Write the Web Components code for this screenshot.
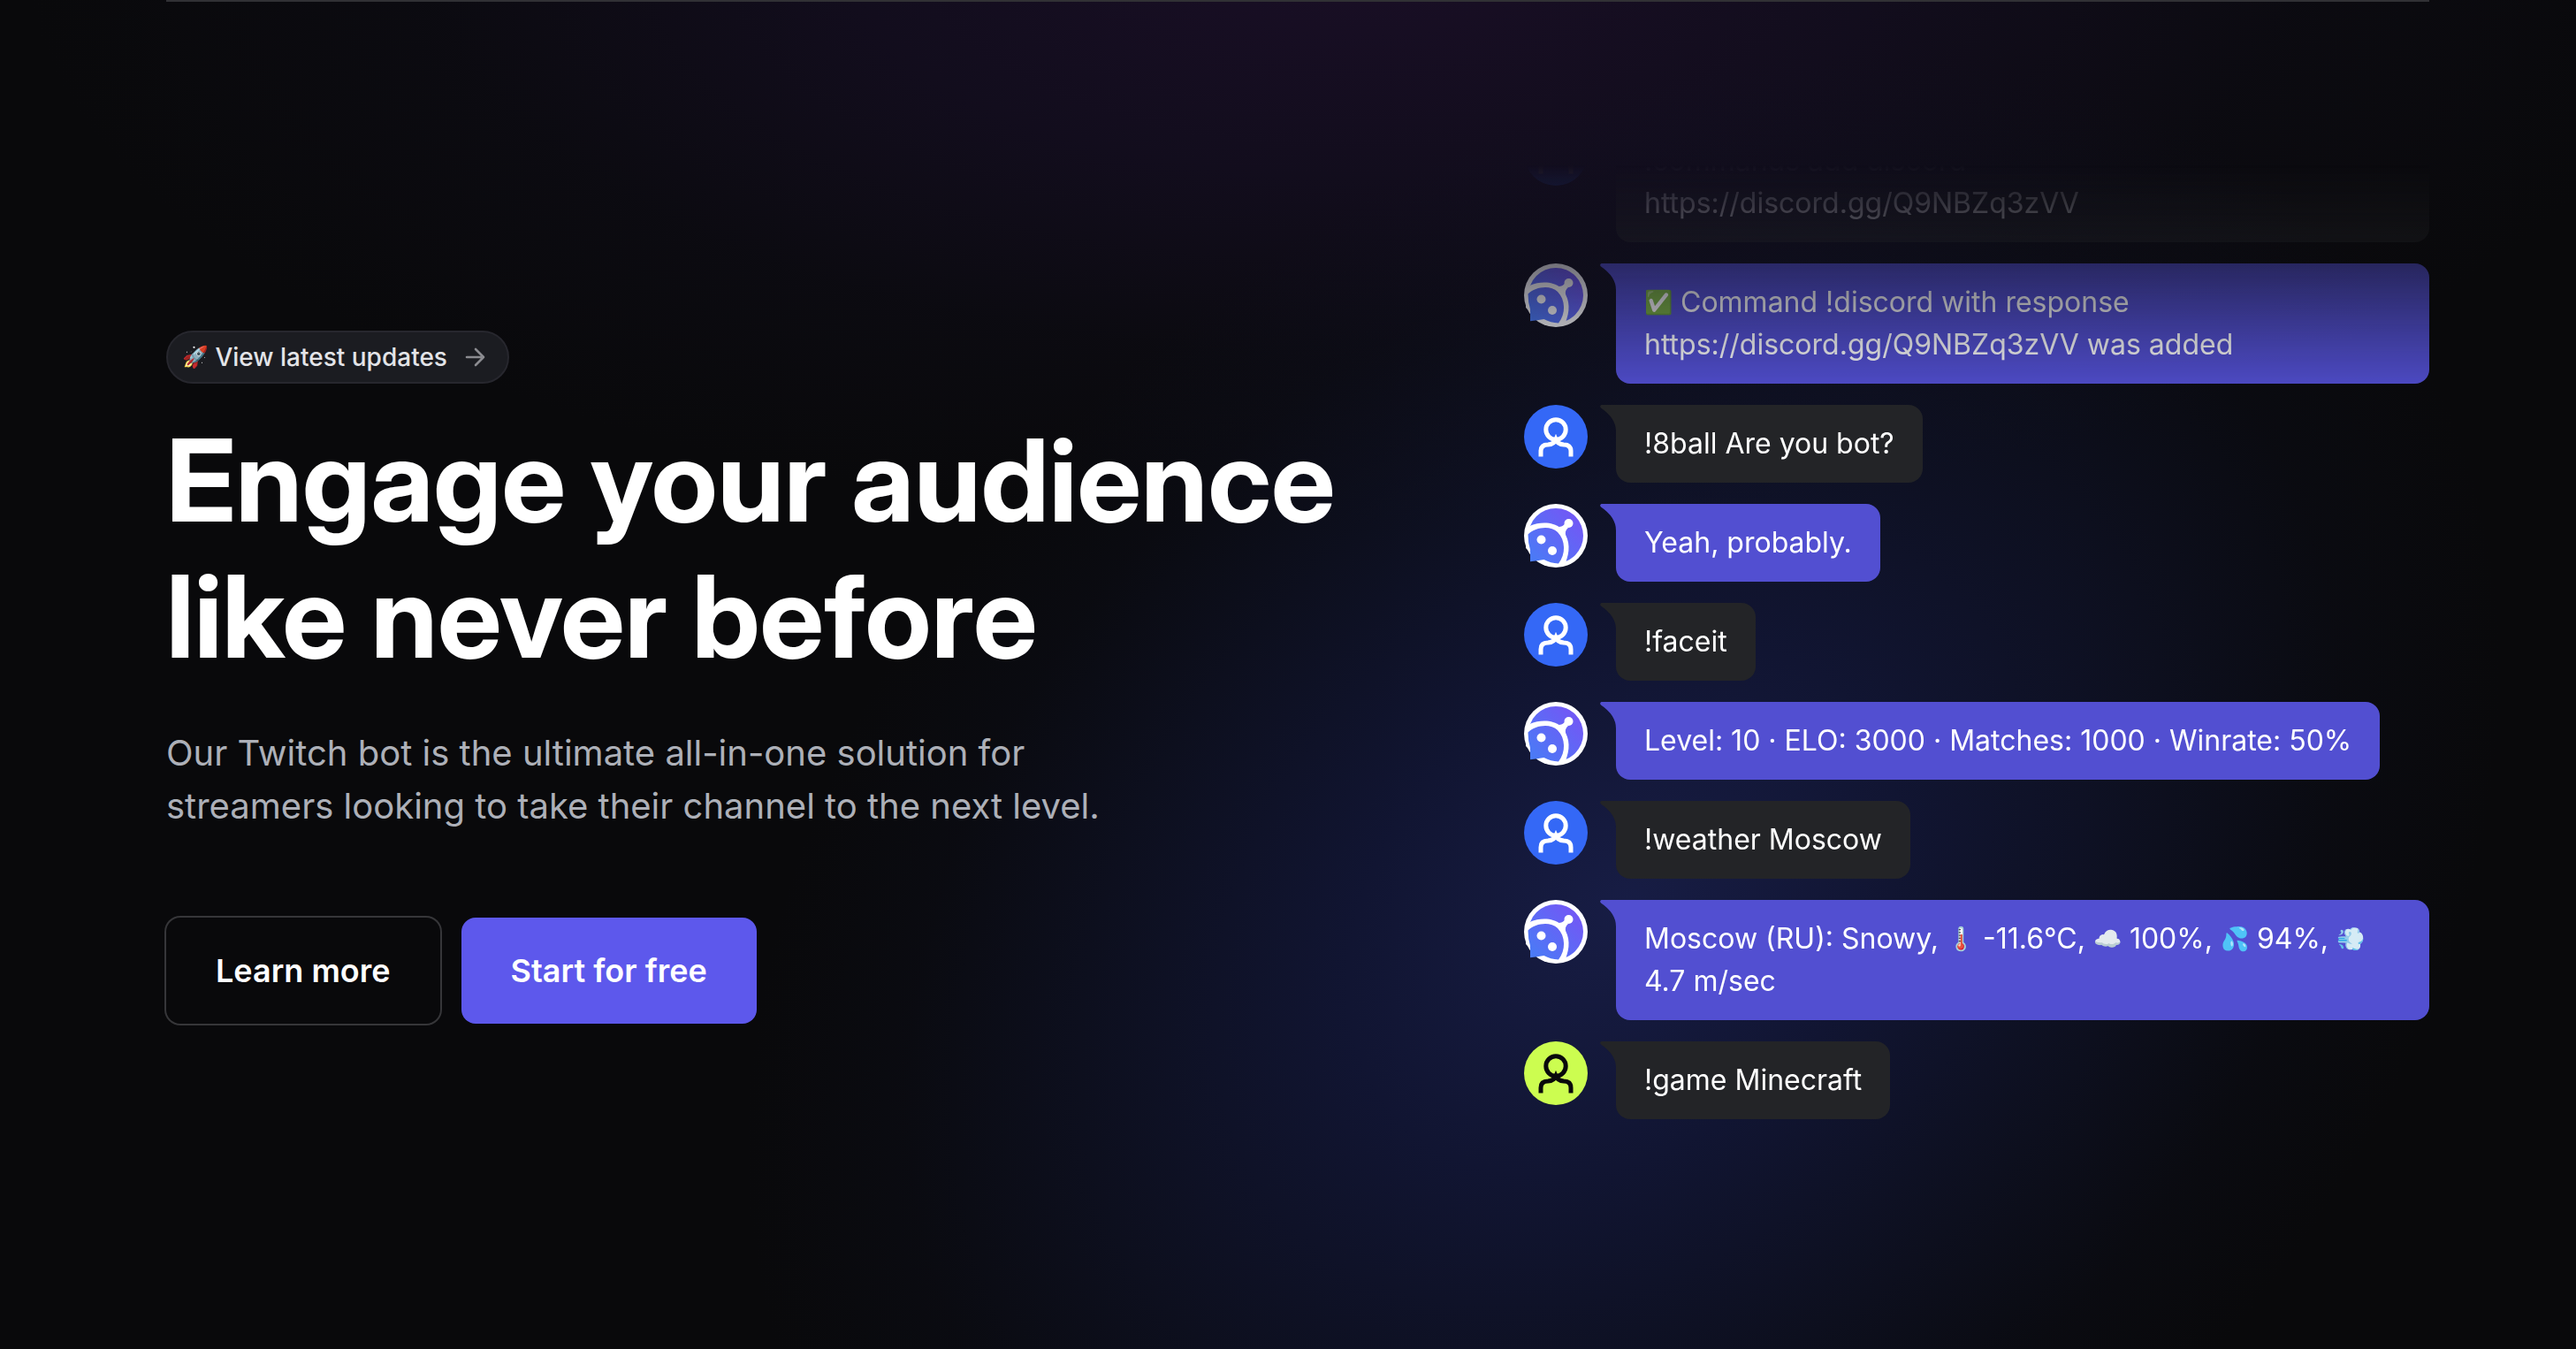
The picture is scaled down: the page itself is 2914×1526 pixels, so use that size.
<!DOCTYPE html>
<html lang="en">
<head>
<meta charset="utf-8">
<meta name="viewport" content="width=device-width, initial-scale=1">
<title>Twitch bot</title>
<style>
body { margin: 0; background: #09090b; color: #fff; font-family: Inter, "Liberation Sans", sans-serif; }
</style>
</head>
<body>
<hero-section>
  <hero-copy slot="copy">
    <update-pill slot="pill" href="#updates"><emoji-glyph small>🚀</emoji-glyph> View latest updates</update-pill>
    <span slot="title">Engage your audience<br>like never before</span>
    <span slot="text">Our Twitch bot is the ultimate all-in-one solution for<br>streamers looking to take their channel to the next level.</span>
    <action-button slot="actions" variant="outline">Learn more</action-button>
    <action-button slot="actions" variant="primary">Start for free</action-button>
  </hero-copy>
  <chat-feed slot="chat">
    <chat-message from="user">!commands add discord https://discord.gg/Q9NBZq3zVV</chat-message>
    <chat-message from="bot"><emoji-glyph>✅</emoji-glyph> Command !discord with response https://discord.gg/Q9NBZq3zVV was added</chat-message>
    <chat-message from="user">!8ball Are you bot?</chat-message>
    <chat-message from="bot">Yeah, probably.</chat-message>
    <chat-message from="user">!faceit</chat-message>
    <chat-message from="bot">Level: 10 · ELO: 3000 · Matches: 1000 · Winrate: 50%</chat-message>
    <chat-message from="user">!weather Moscow</chat-message>
    <chat-message from="bot">Moscow (RU): Snowy, <emoji-glyph>🌡️</emoji-glyph> -11.6°C, <emoji-glyph>☁️</emoji-glyph> 100%, <emoji-glyph>💦</emoji-glyph> 94%, <emoji-glyph>💨</emoji-glyph> 4.7&nbsp;m/sec</chat-message>
    <chat-message from="guest">!game Minecraft</chat-message>
  </chat-feed>
</hero-section>
<script>
const define = (name, html, setup) => customElements.define(name, class extends HTMLElement {
  constructor() {
    super();
    const t = document.createElement('template');
    t.innerHTML = html;
    this.attachShadow({ mode: 'open' }).append(t.content.cloneNode(true));
  }
  connectedCallback() { if (setup) setup(this, this.shadowRoot); }
});

define('hero-section', `
<style>
:host { display: block; position: relative; isolation: isolate; overflow: hidden; min-height: 100vh;
  box-sizing: border-box; padding: 0 166px 0 188px;
  background: radial-gradient(ellipse 52% 42% at 53% -3%, rgba(42, 20, 64, .5), rgba(32, 19, 56, .4) 38%, rgba(20, 16, 36, .22) 70%, transparent), #09090b; }
/* blue glow behind the chat */
:host::before { content: ""; position: absolute; z-index: -1; width: 76%; aspect-ratio: 4 / 3; left: 25%; top: 13%;
  transform: rotate(-42deg);
  background: radial-gradient(closest-side, rgba(30, 38, 96, .68), rgba(23, 30, 80, .56) 32%, rgba(20, 26, 64, .38) 60%, rgba(16, 20, 46, .16) 82%, transparent); }
.wrap { max-width: 2560px; margin: 0 auto; border-top: 2px solid #313135; display: flex; align-items: center;
  justify-content: space-between; gap: 64px; padding: 184px 0 180px; box-sizing: border-box; }
slot { display: block; }
.copy { flex: 1; min-width: 0; }
.chat { flex: 0 0 40%; min-width: 0; padding-bottom: 80px; }
</style>
<main class="wrap"><slot class="copy" name="copy"></slot><slot class="chat" name="chat"></slot></main>`);

define('hero-copy', `
<style>
:host { display: flex; flex-direction: column; align-items: flex-start; }
h1 { margin: 32px 0 0; font-family: "Inter Display", Inter, "Liberation Sans", sans-serif; font-size: 129px; line-height: 154px; font-weight: 700; white-space: nowrap; }
p { margin: 48px 0 0; font-size: 40px; line-height: 60px; color: #adb0b8; }
.actions { display: flex; gap: 24px; margin-top: 96px; }
</style>
<slot name="pill"></slot>
<h1><slot name="title"></slot></h1>
<p><slot name="text"></slot></p>
<div class="actions"><slot name="actions"></slot></div>`);

define('emoji-glyph', `
<style>
:host { font-size: 26px; line-height: 1; vertical-align: 2px; }
:host([small]) { font-size: 24px; }
</style>
<slot></slot>`);

define('update-pill', `
<style>
:host { display: block; }
a { display: flex; align-items: center; gap: 16px; height: 60px; padding: 0 20px 0 16px; box-sizing: border-box;
  border: 2px solid #27272e; border-radius: 30px; background: #1b1c21; color: #e3e4e8; text-decoration: none;
  font-size: 28px; line-height: 40px; font-weight: 500; white-space: nowrap; }
svg { width: 32px; height: 32px; }
</style>
<a><span><slot></slot></span><svg viewBox="0 0 32 32" fill="none" stroke="#8b8b90" stroke-width="2.6" stroke-linecap="round" stroke-linejoin="round" aria-hidden="true"><path d="M6 16h19M16 7l9 9-9 9"/></svg></a>`,
(el, root) => { root.querySelector('a').href = el.getAttribute('href') || '#'; });

define('action-button', `
<style>
:host { display: block; }
button { font: inherit; font-size: 36px; line-height: 56px; font-weight: 600; color: #fff; height: 120px;
  padding: 0 56px; border: 0; border-radius: 16px; background: #5d58ec; white-space: nowrap; cursor: pointer; }
:host([variant="outline"]) button { background: none; box-shadow: 0 0 0 2px #363639; }
</style>
<button type="button"><slot></slot></button>`);

define('chat-feed', `
<style>
:host { display: flex; flex-direction: column; justify-content: flex-end; gap: 24px; height: 1080px; overflow: hidden;
  -webkit-mask-image: linear-gradient(transparent, #000 25%); mask-image: linear-gradient(transparent, #000 25%); }
</style>
<slot></slot>`);

const person = `<svg viewBox="0 0 72 72" aria-hidden="true"><circle cx="36" cy="36" r="36" fill="var(--disc)"/><g fill="none" stroke="var(--ink)" stroke-width="5"><circle cx="36" cy="28" r="11.2"/><path d="M19 58.500v-6q0-7.500 8-7.500Q34 44.500 36 39.500Q38 44.500 45 45q8 0 8 7.500v6"/></g></svg>`;
const bug = `<svg viewBox="0 0 72 72" aria-hidden="true"><defs><linearGradient id="g" gradientUnits="userSpaceOnUse" x1="60" y1="12" x2="8" y2="62"><stop offset="0" stop-color="#7357f5"/><stop offset="1" stop-color="#4a7bf6"/></linearGradient></defs>
<circle cx="36" cy="36" r="36" fill="#fff"/><circle cx="36" cy="36" r="31" fill="url(#g)"/>
<path d="M7.500 24.500C18 20 33 20 41.500 27.500C51 37 52.500 50 48.500 62L46 70L24 70L2 50L3 30Z" fill="#fff"/>
<path d="M4.500 34.500C13 26 30 24 38 32C47 41 47.500 57 39 67.500Q30 67 22.500 63Q15 64.500 7 65.300V52Q4.500 44 4.500 34.500Z" fill="url(#g)"/>
<path d="M42 31L50 22" stroke="#fff" stroke-width="4.500"/><path d="M38 26Q43 26.500 46 23L50 27Q46 30 47 36Z" fill="#fff"/>
<circle cx="50.500" cy="22" r="5" fill="#fff"/><circle cx="19.500" cy="40.500" r="5" fill="#fff"/><circle cx="32" cy="53" r="5" fill="#fff"/></svg>`;

define('chat-message', `
<style>
:host { display: flex; align-items: flex-start; flex: none; --bubble: #232427; --disc: #3468f6; --ink: #fff; }
:host([from="bot"]) { --bubble: #524fd1; }
:host([from="guest"]) { --disc: #ccfd50; --ink: #09090b; }
.avatar { flex: none; width: 72px; height: 72px; }
.avatar svg { display: block; width: 100%; height: 100%; }
.tail { flex: none; width: 18px; height: 30px; margin-left: 14px; fill: var(--bubble); }
.bubble { background: var(--bubble); border-radius: 0 16px 16px 16px; padding: 20px 32px; font-size: 32px; line-height: 48px; min-width: 0; }
</style>
<div class="avatar"></div>
<svg class="tail" viewBox="0 0 18 30" aria-hidden="true"><path d="M18.500 0H1.500Q-1 1.500 1 3.500Q18 15 18 30H18.500Z"/></svg>
<div class="bubble"><slot></slot></div>`,
(el, root) => { root.querySelector('.avatar').innerHTML = el.getAttribute('from') === 'bot' ? bug : person; });
</script>
</body>
</html>
